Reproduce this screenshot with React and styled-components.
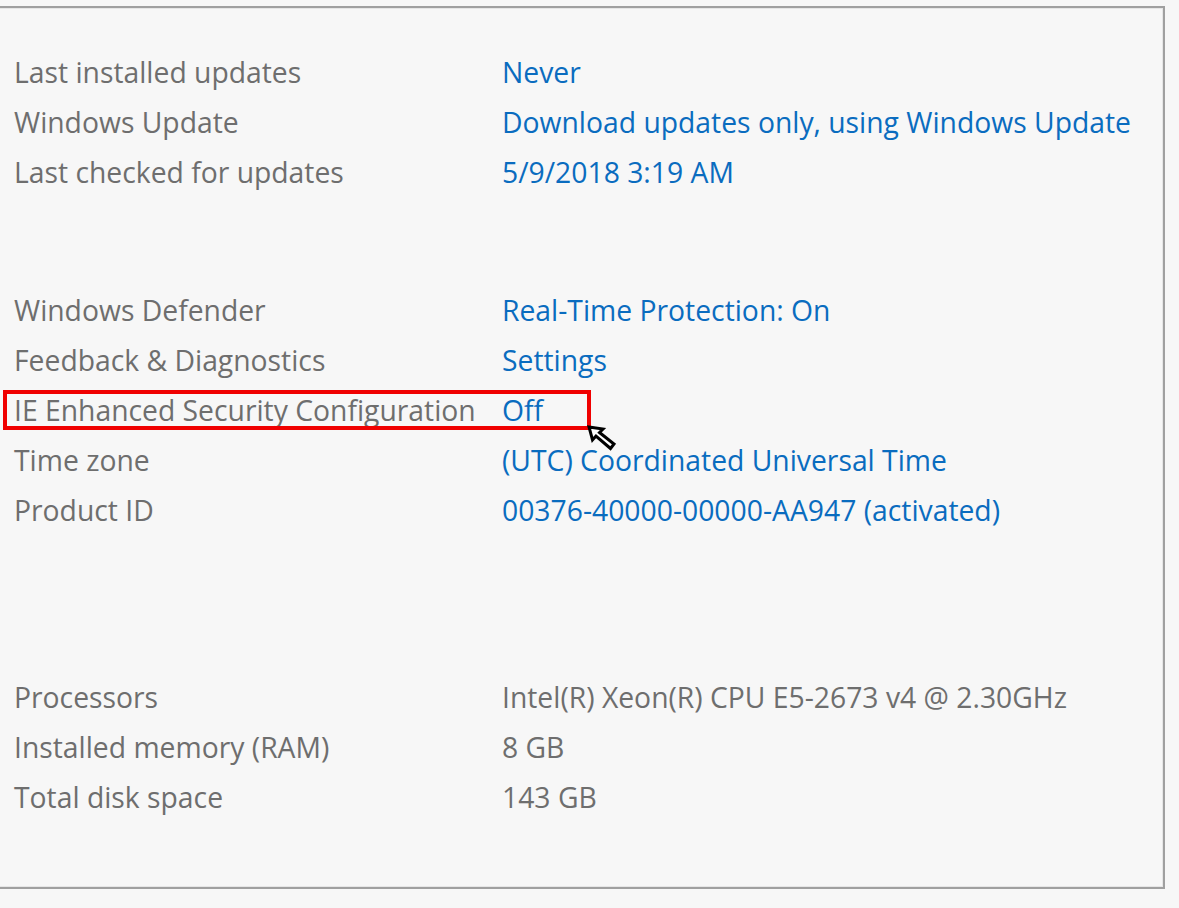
import React from "react";
import styled, { createGlobalStyle } from "styled-components";

const GlobalStyle = createGlobalStyle`
  html, body {
    margin: 0;
    padding: 0;
    background: #f7f7f7;
    overflow: hidden;
  }
  body {
    font-family: "Open Sans", "Noto Sans", sans-serif;
  }
`;

const Page = styled.div`
  width: 1179px;
  height: 908px;
  padding-top: 6px;
  box-sizing: border-box;
`;

const Panel = styled.div`
  margin-left: -6px;
  width: 1171px;
  height: 883px;
  box-sizing: border-box;
  border: 2px solid #a0a0a0;
  box-shadow: inset 0 0 0 1px #e6e6e6;
  padding: 39px 0 0 18px;
  display: flex;
  flex-direction: column;
`;

const Group = styled.div`
  display: grid;
  grid-template-columns: 488px auto;
  margin-bottom: ${(p) => p.$gap || 0}px;
`;

const Label = styled.div`
  font-size: 28.3px;
  line-height: 50px;
  color: #6e6e6e;
  white-space: nowrap;
`;

const Value = styled.div`
  font-size: 28.3px;
  line-height: 50px;
  color: ${(p) => (p.$link ? "#0a6cbf" : "#6e6e6e")};
  white-space: nowrap;
`;

const Highlight = styled.div`
  position: relative;
  grid-column: 1 / span 2;
  display: grid;
  grid-template-columns: 488px auto;
`;

const RedBox = styled.div`
  position: absolute;
  left: -11px;
  top: 5px;
  width: 588px;
  height: 40px;
  box-sizing: border-box;
  border: 4px solid #f00000;
  pointer-events: none;
`;

const Cursor = styled.svg`
  position: absolute;
  left: 573px;
  top: 40px;
`;

const updates = [
  ["Last installed updates", "Never"],
  ["Windows Update", "Download updates only, using Windows Update"],
  ["Last checked for updates", "5/9/2018 3:19 AM"],
];

const hardware = [
  ["Processors", "Intel(R) Xeon(R) CPU E5-2673 v4 @ 2.30GHz"],
  ["Installed memory (RAM)", "8 GB"],
  ["Total disk space", "143 GB"],
];

const Row = ({ label, value, link }) => (
  <>
    <Label>{label}</Label>
    <Value $link={link}>{value}</Value>
  </>
);

export default function App() {
  return (
    <Page>
      <GlobalStyle />
      <Panel>
        <Group $gap={88}>
          {updates.map(([l, v]) => (
            <Row key={l} label={l} value={v} link />
          ))}
        </Group>

        <Group $gap={137}>
          <Row label="Windows Defender" value="Real-Time Protection: On" link />
          <Row label="Feedback & Diagnostics" value="Settings" link />
          <Highlight>
            <Label>IE Enhanced Security Configuration</Label>
            <Value $link>Off</Value>
            <RedBox />
            <Cursor width="34" height="28" viewBox="0 0 34 28">
              {/* arrow pointing up-left */}
              <path
                d="M2 2 L16 4 L12.5 7.5 L27 19 L23.5 23.5 L9 11 L5.5 15 Z"
                fill="#fff"
                stroke="#000"
                strokeWidth="3"
                strokeLinejoin="miter"
              />
            </Cursor>
          </Highlight>
          <Row label="Time zone" value="(UTC) Coordinated Universal Time" link />
          <Row label="Product ID" value="00376-40000-00000-AA947 (activated)" link />
        </Group>

        <Group>
          {hardware.map(([l, v]) => (
            <Row key={l} label={l} value={v} />
          ))}
        </Group>
      </Panel>
    </Page>
  );
}
